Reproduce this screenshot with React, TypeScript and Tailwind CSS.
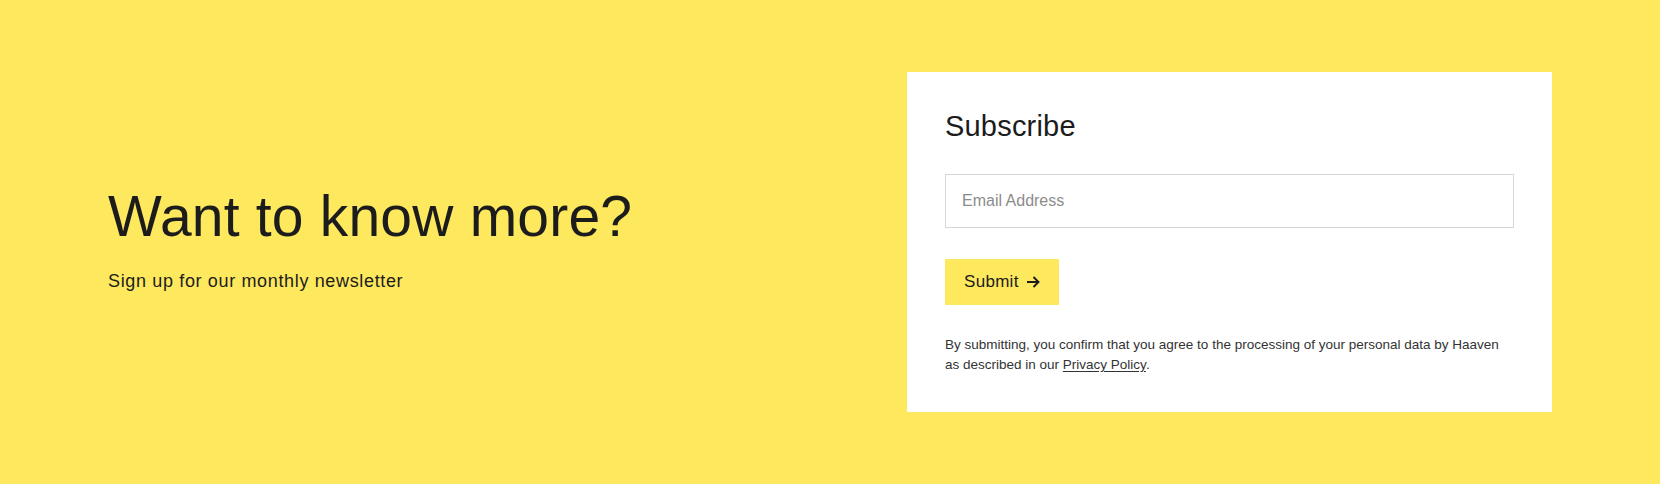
export default function App() {
  return (
    <div
      className="flex h-[484px] w-full items-center justify-between bg-[#fde85e] px-[108px] text-[#1c1c1c]"
      style={{ fontFamily: '"Liberation Sans", Arial, sans-serif' }}
    >
      <div className="flex flex-col pb-[5px]">
        <h2 className="text-[57px] font-normal leading-[1.1] tracking-[0.2px]">
          Want to know more?
        </h2>
        <p className="mt-[20px] text-[18px] leading-[26px] tracking-[0.65px]">
          Sign up for our monthly newsletter
        </p>
      </div>

      <div className="flex w-[645px] flex-col bg-white px-[38px] pb-[37px] pt-[37px]">
        <h3 className="text-[29px] font-normal leading-[35px] tracking-[0.2px]">Subscribe</h3>

        <input
          type="email"
          placeholder="Email Address"
          className="mt-[30px] h-[54px] w-full border border-[#d6d6d6] px-[16px] text-[16px] text-[#1c1c1c] outline-none placeholder:text-[#8c8c8c]"
        />

        <div className="mt-[31px]">
          <button className="flex h-[46px] items-center gap-[7px] bg-[#fde85e] px-[19px] text-[17px] font-medium tracking-[0.3px] text-[#1c1c1c]">
            Submit
            <svg viewBox="0 0 14 12" className="h-[12px] w-[14px]" fill="none" stroke="currentColor" strokeWidth={1.9}>
              <path d="M1 6h11.5M7.5 1l5 5-5 5" />
            </svg>
          </button>
        </div>

        <p className="mt-[30px] text-[13.5px] leading-[20px] text-[#333333]">
          By submitting, you confirm that you agree to the processing of your personal data by Haaven
          as described in our{" "}
          <a href="#" className="underline underline-offset-2">
            Privacy Policy
          </a>
          .
        </p>
      </div>
    </div>
  );
}
